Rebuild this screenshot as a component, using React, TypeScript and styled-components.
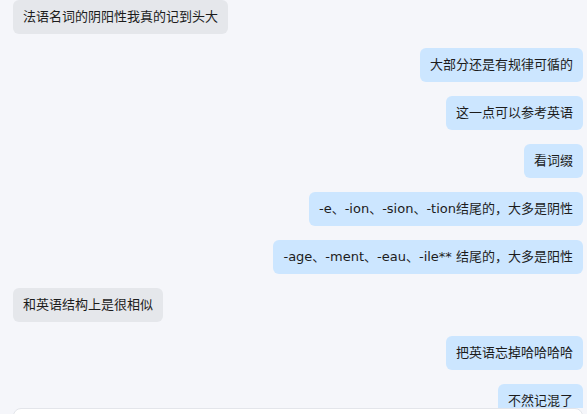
import React from "react";
import styled, { createGlobalStyle } from "styled-components";

const GlobalStyle = createGlobalStyle`
  html, body {
    margin: 0;
    padding: 0;
    background-color: #f5f6fa;
  }
  body {
    font-family: "DejaVu Sans", "Noto Sans CJK SC", sans-serif;
  }
`;

const messages = [
  { id: 1, mine: false, text: "法语名词的阴阳性我真的记到头大" },
  { id: 2, mine: true, text: "大部分还是有规律可循的" },
  { id: 3, mine: true, text: "这一点可以参考英语" },
  { id: 4, mine: true, text: "看词缀" },
  { id: 5, mine: true, text: "-e、-ion、-sion、-tion结尾的，大多是阴性" },
  { id: 6, mine: true, text: "-age、-ment、-eau、-ile** 结尾的，大多是阳性" },
  { id: 7, mine: false, text: "和英语结构上是很相似" },
  { id: 8, mine: true, text: "把英语忘掉哈哈哈哈" },
  { id: 9, mine: true, text: "不然记混了" },
];

const Page = styled.div`
  height: 414px;
  display: flex;
  flex-direction: column;
  overflow: hidden;
  padding: 0 4px 0 13px;
  background-color: #f5f6fa;
`;

const MessageList = styled.div`
  height: 408px;
  flex: none;
  display: flex;
  flex-direction: column;
  gap: 14px;
  overflow: hidden;
`;

const Row = styled.div<{ $mine: boolean }>`
  display: flex;
  justify-content: ${(props) => (props.$mine ? "flex-end" : "flex-start")};
`;

const Bubble = styled.div<{ $mine: boolean }>`
  padding: 8px 10px;
  font-size: 13px;
  line-height: 18px;
  color: #1c1c1c;
  border-radius: 6px;
  white-space: nowrap;
  background-color: ${(props) => (props.$mine ? "#cce6ff" : "#e5e7eb")};
`;

const Composer = styled.div`
  flex: none;
  height: 60px;
  background-color: #ffffff;
  border: 1px solid #e3e5ea;
  border-radius: 8px;
`;

function App() {
  return (
    <>
      <GlobalStyle />
      <Page>
        <MessageList>
          {messages.map((m) => (
            <Row key={m.id} $mine={m.mine}>
              <Bubble $mine={m.mine}>{m.text}</Bubble>
            </Row>
          ))}
        </MessageList>
        <Composer />
      </Page>
    </>
  );
}

export default App;
